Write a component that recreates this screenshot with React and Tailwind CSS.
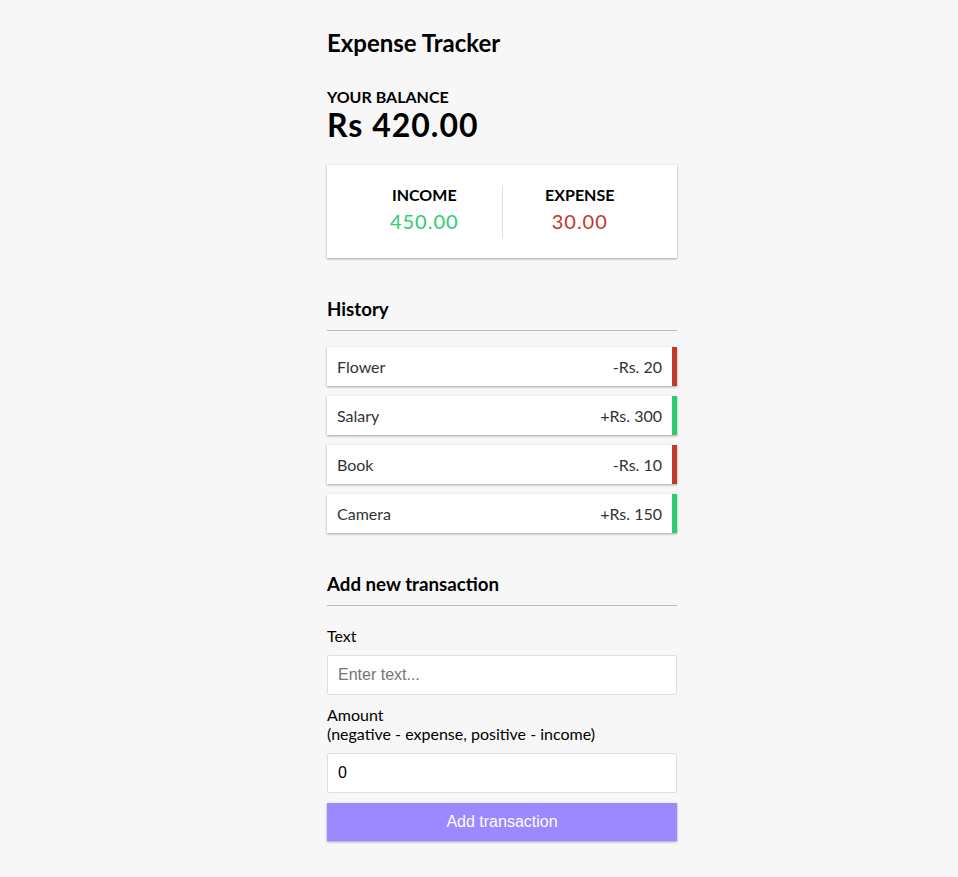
import React from 'react';

const transactions = [
    { id: 1, text: 'Flower', amount: -20 },
    { id: 2, text: 'Salary', amount: 300 },
    { id: 3, text: 'Book', amount: -10 },
    { id: 4, text: 'Camera', amount: 150 },
];

const shadow = 'shadow-[0_1px_3px_rgba(0,0,0,0.12),0_1px_2px_rgba(0,0,0,0.24)]';

function TransactionItem({ t }) {
    const sign = t.amount < 0 ? '-' : '+';
    return (
        <li
            className={`flex justify-between bg-white p-[10px] text-[#333] leading-[19px] ${shadow} ${t.amount < 0 ? 'border-r-[5px] border-[#c0392b]' : 'border-r-[5px] border-[#2ecc71]'}`}
        >
            {t.text}
            <span>{sign}Rs. {Math.abs(t.amount)}</span>
        </li>
    );
}

export default function App() {
    const amounts = transactions.map(t => t.amount);
    const total = amounts.reduce((a, b) => a + b, 0).toFixed(2);
    const income = amounts.filter(a => a > 0).reduce((a, b) => a + b, 0).toFixed(2);
    const expense = Math.abs(amounts.filter(a => a < 0).reduce((a, b) => a + b, 0)).toFixed(2);

    return (
        <div className="min-h-screen bg-[#f7f7f7] text-black font-['Lato','Noto_Sans',sans-serif] text-[16px] pl-[46px]">
            <div className="w-[350px] mx-auto pt-[29px] pb-[36px]">
                <h2 className="text-[24px] font-bold leading-[28.8px]">Expense Tracker</h2>

                {/* Balance */}
                <h4 className="mt-[29px] font-bold uppercase leading-[19.2px]">Your Balance</h4>
                <h1 className="text-[32px] font-bold leading-[38.4px] tracking-[1px]">Rs {total}</h1>

                <div className={`flex bg-white p-[20px] mt-[21px] ${shadow}`}>
                    <div className="flex-1 text-center border-r border-[#dedede]">
                        <h4 className="font-bold uppercase leading-[19px]">Income</h4>
                        <p className="my-[5px] text-[20px] leading-[24px] tracking-[1px] text-[#2ecc71]">{income}</p>
                    </div>
                    <div className="flex-1 text-center">
                        <h4 className="font-bold uppercase leading-[19px]">Expense</h4>
                        <p className="my-[5px] text-[20px] leading-[24px] tracking-[1px] text-[#c0392b]">{expense}</p>
                    </div>
                </div>

                {/* History */}
                <h3 className="mt-[40px] pb-[10px] border-b border-[#bbb] text-[18.72px] font-bold leading-[22px]">History</h3>
                <ul className="mt-[16px] flex flex-col gap-[10px]">
                    {transactions.map(t => <TransactionItem key={t.id} t={t} />)}
                </ul>

                {/* Form */}
                <h3 className="mt-[40px] pb-[10px] border-b border-[#bbb] text-[18.72px] font-bold leading-[22px]">Add new transaction</h3>
                <form className="mt-[10px]">
                    <div>
                        <label htmlFor="text" className="inline-block my-[10px] leading-[19px]">Text</label>
                        <input
                            id="text"
                            type="text"
                            placeholder="Enter text..."
                            className="block w-full bg-white border border-[#dedede] rounded-[2px] p-[10px] text-[16px] leading-[18px] font-['Liberation_Sans',Arial,sans-serif] placeholder:text-[#757575] outline-none"
                        />
                    </div>
                    <div>
                        <label htmlFor="amount" className="inline-block my-[10px] leading-[19px]">
                            Amount <br />
                            (negative - expense, positive - income)
                        </label>
                        <input
                            id="amount"
                            type="number"
                            defaultValue={0}
                            className="block w-full bg-white border border-[#dedede] rounded-[2px] p-[10px] text-[16px] leading-[18px] font-['Liberation_Sans',Arial,sans-serif] outline-none"
                        />
                    </div>
                    <button
                        type="button"
                        className={`block w-full mt-[10px] bg-[#9c88ff] text-white p-[10px] text-[16px] leading-[18px] font-['Liberation_Sans',Arial,sans-serif] ${shadow}`}
                    >
                        Add transaction
                    </button>
                </form>
            </div>
        </div>
    );
}
